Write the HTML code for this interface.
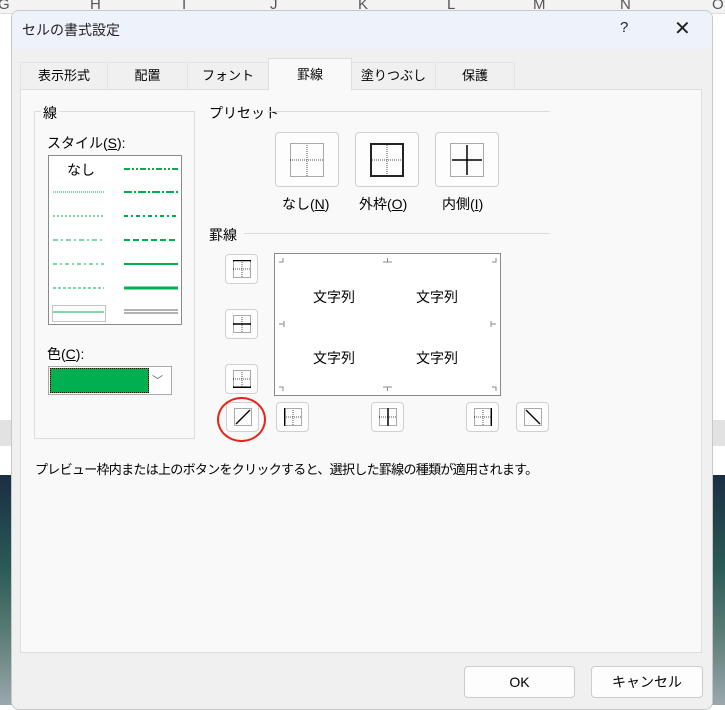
<!DOCTYPE html>
<html><head><meta charset="utf-8"><style>
*{margin:0;padding:0;box-sizing:border-box}
body{width:725px;height:705px;overflow:hidden;position:relative;background:#fff;font-family:"Liberation Sans","Noto Sans CJK JP",sans-serif;color:#000}
.a{position:absolute}
.t{font-size:13px;white-space:nowrap}
.h{position:absolute;top:-4px;color:#555;font-size:15px}
.tab{position:absolute;top:62px;height:28px;border:1px solid #e3e3e3;border-bottom:none;background:#f0f0f0;font-size:13px;text-align:center;line-height:26px}
.btn{position:absolute;background:#fdfdfd;border:1px solid #d0d0d0;border-radius:4px}
.btn svg{position:absolute;left:50%;top:50%;transform:translate(-50%,-50%)}
u{text-decoration:underline}
</style></head><body>
<div class="a" style="left:0;top:0;width:725px;height:14px;background:#f3f3f3;border-bottom:1px solid #ddd"></div>
<div class="h" style="left:-2px">G</div>
<div class="h" style="left:90px">H</div>
<div class="h" style="left:182px">I</div>
<div class="h" style="left:270px">J</div>
<div class="h" style="left:358px">K</div>
<div class="h" style="left:447px">L</div>
<div class="h" style="left:533px">M</div>
<div class="h" style="left:620px">N</div>
<div class="h" style="left:712px">O</div>
<div class="a" style="left:0;top:420px;width:725px;height:26px;background:#e2e2e2"></div>
<div class="a" style="left:0;top:475px;width:725px;height:230px;background:linear-gradient(180deg,#1a2e44,#2a5a55 40%,#5d7d78 70%,#9aa8ad)"></div>
<div class="a" style="left:11px;top:10px;width:702px;height:700px;background:#f0f0f0;border:1px solid #c8c8c8;border-radius:8px;overflow:hidden">
 <div class="a" style="left:0;top:0;width:702px;height:38px;background:#eef2fb"></div>
</div>
<div class="a" style="left:22px;top:20px;font-size:14px;color:#222">セルの書式設定</div>
<div class="a" style="left:620px;top:19px;font-size:15px;color:#222">?</div>
<div class="a" style="left:674px;top:16px;font-size:20px;color:#222;font-weight:300">✕</div>
<div class="tab" style="left:20px;width:88px">表示形式</div>
<div class="tab" style="left:107px;width:81px">配置</div>
<div class="tab" style="left:187px;width:82px">フォント</div>
<div class="tab" style="left:351px;width:85px">塗りつぶし</div>
<div class="tab" style="left:435px;width:80px">保護</div>
<div class="a" style="left:20px;top:89px;width:682px;height:564px;background:#f9f9f9;border:1px solid #dedede"></div>
<div class="tab" style="left:268px;top:58px;width:84px;height:32px;background:#f9f9f9;line-height:32px;border-color:#dedede">罫線</div>
<div class="a" style="left:34px;top:111px;width:161px;height:328px;border:1px solid #dcdcdc"></div>
<div class="a t" style="left:41px;top:103px;background:#f9f9f9;padding:0 2px;font-size:14px">線</div>
<div class="a t" style="left:47px;top:133px;font-size:14px">スタイル(<u>S</u>):</div>
<div class="a" style="left:48px;top:155px;width:134px;height:170px;background:#fff;border:1px solid #8a8a8a"></div>
<svg class="a" style="left:48px;top:155px" width="134" height="170">
<g stroke="#00b050" fill="none">
<line x1="5" y1="37" x2="56" y2="37" stroke-dasharray="1,1"/>
<line x1="5" y1="61" x2="56" y2="61" stroke-dasharray="2,2"/>
<line x1="5" y1="85" x2="56" y2="85" stroke-dasharray="5,3,2,3"/>
<line x1="5" y1="109" x2="56" y2="109" stroke-dasharray="4,3,2,3"/>
<line x1="5" y1="133" x2="56" y2="133" stroke-dasharray="3,2"/>
<line x1="5" y1="157" x2="56" y2="157"/>
<rect x="4.5" y="150.5" width="53" height="16" stroke="#888" stroke-dasharray="1,1"/>
<line x1="76" y1="14" x2="130" y2="14" stroke-width="2" stroke-dasharray="6,2,2,2,2,2"/>
<line x1="76" y1="37" x2="130" y2="37" stroke-width="2" stroke-dasharray="8,2,2,2"/>
<line x1="76" y1="61" x2="130" y2="61" stroke-width="2" stroke-dasharray="4,3,2,3"/>
<line x1="76" y1="85" x2="130" y2="85" stroke-width="2" stroke-dasharray="6,3"/>
<line x1="76" y1="109" x2="130" y2="109" stroke-width="2"/>
<line x1="76" y1="133" x2="130" y2="133" stroke-width="3"/>
<line x1="76" y1="155" x2="130" y2="155" stroke="#666"/>
<line x1="76" y1="158" x2="130" y2="158" stroke="#666"/>
</g></svg>
<div class="a t" style="left:67px;top:160px;font-size:14px">なし</div>
<div class="a t" style="left:47px;top:344px;font-size:14px">色(<u>C</u>):</div>
<div class="a" style="left:48px;top:366px;width:124px;height:29px;background:#fff;border:1px solid #aaa"></div>
<div class="a" style="left:50px;top:368px;width:99px;height:25px;border:1px dotted #000;background:#00b050"></div>
<div class="a" style="left:152px;top:372px;font-size:11px;color:#666">﹀</div>
<div class="a t" style="left:209px;top:103px;font-size:14px">プリセット</div>
<div class="a" style="left:268px;top:111px;width:282px;height:1px;background:#dcdcdc"></div>
<div class="btn" style="left:275px;top:132px;width:64px;height:55px"><svg width="34" height="34"><g fill="none" stroke="#555" stroke-dasharray="1,1"><rect x="0.5" y="0.5" width="33" height="33"/><line x1="17" y1="0" x2="17" y2="34"/><line x1="0" y1="17" x2="34" y2="17"/></g></svg></div>
<div class="btn" style="left:355px;top:132px;width:64px;height:55px"><svg width="34" height="34"><g fill="none" stroke="#555" stroke-dasharray="1,1"><line x1="17" y1="0" x2="17" y2="34"/><line x1="0" y1="17" x2="34" y2="17"/></g><rect x="1" y="1" width="32" height="32" fill="none" stroke="#222" stroke-width="2"/></svg></div>
<div class="btn" style="left:435px;top:132px;width:64px;height:55px"><svg width="34" height="34"><rect x="0.5" y="0.5" width="33" height="33" fill="none" stroke="#555" stroke-dasharray="1,1"/><g stroke="#000" stroke-width="1.5"><line x1="17" y1="2" x2="17" y2="32"/><line x1="2" y1="17" x2="32" y2="17"/></g></svg></div>
<div class="a t" style="left:282px;top:194px;font-size:14px">なし(<u>N</u>)</div>
<div class="a t" style="left:359px;top:194px;font-size:14px">外枠(<u>O</u>)</div>
<div class="a t" style="left:442px;top:194px;font-size:14px">内側(<u>I</u>)</div>
<div class="a t" style="left:209px;top:225px;font-size:14px">罫線</div>
<div class="a" style="left:244px;top:233px;width:306px;height:1px;background:#dcdcdc"></div>
<svg width="0" height="0" style="position:absolute"><defs>
<g id="g"><g fill="none" stroke="#555" stroke-dasharray="1,1"><rect x="0.5" y="0.5" width="17" height="17"/><line x1="9" y1="0" x2="9" y2="18"/><line x1="0" y1="9" x2="18" y2="9"/></g></g>
</defs></svg>
<div class="btn" style="left:225px;top:254px;width:33px;height:30px"><svg width="18" height="18"><use href="#g"/><line x1="0" y1="0.5" x2="18" y2="0.5" stroke="#000" stroke-width="1.5"/></svg></div>
<div class="btn" style="left:225px;top:309px;width:33px;height:30px"><svg width="18" height="18"><use href="#g"/><line x1="0" y1="9" x2="18" y2="9" stroke="#000" stroke-width="1.5"/></svg></div>
<div class="btn" style="left:225px;top:364px;width:33px;height:30px"><svg width="18" height="18"><use href="#g"/><line x1="0" y1="17.3" x2="18" y2="17.3" stroke="#000" stroke-width="1.5"/></svg></div>
<div class="btn" style="left:226px;top:402px;width:33px;height:30px"><svg width="18" height="18"><rect x="0.5" y="0.5" width="17" height="17" fill="none" stroke="#555" stroke-dasharray="1,1"/><line x1="2" y1="16" x2="16" y2="2" stroke="#000" stroke-width="1.3"/></svg></div>
<div class="btn" style="left:276px;top:402px;width:33px;height:30px"><svg width="18" height="18"><use href="#g"/><line x1="0.7" y1="0" x2="0.7" y2="18" stroke="#000" stroke-width="1.5"/></svg></div>
<div class="btn" style="left:371px;top:402px;width:33px;height:30px"><svg width="18" height="18"><use href="#g"/><line x1="9" y1="0" x2="9" y2="18" stroke="#000" stroke-width="1.5"/></svg></div>
<div class="btn" style="left:466px;top:402px;width:33px;height:30px"><svg width="18" height="18"><use href="#g"/><line x1="17.3" y1="0" x2="17.3" y2="18" stroke="#000" stroke-width="1.5"/></svg></div>
<div class="btn" style="left:516px;top:402px;width:33px;height:30px"><svg width="18" height="18"><rect x="0.5" y="0.5" width="17" height="17" fill="none" stroke="#555" stroke-dasharray="1,1"/><line x1="2" y1="2" x2="16" y2="16" stroke="#000" stroke-width="1.3"/></svg></div>
<div class="a" style="left:274px;top:253px;width:227px;height:143px;background:#fff;border:1px solid #8a8a8a"></div>
<svg class="a" style="left:274px;top:253px" width="227" height="143"><g stroke="#888" fill="none">
<path d="M5 9H9V5"/><path d="M222 5V9H218"/><path d="M5 134H9V138"/><path d="M222 138V134H218"/>
<path d="M109 9H118M113.5 9V5"/><path d="M109 134H118M113.5 134V138"/>
<path d="M5 71H10M10 68V74" /><path d="M222 71H217M217 68V74"/>
</g></svg>
<div class="a t" style="left:313px;top:287px;font-size:14px">文字列</div>
<div class="a t" style="left:416px;top:287px;font-size:14px">文字列</div>
<div class="a t" style="left:313px;top:348px;font-size:14px">文字列</div>
<div class="a t" style="left:416px;top:348px;font-size:14px">文字列</div>
<div class="a" style="left:217px;top:397px;width:49px;height:45px;border:2px solid #e8231a;border-radius:50%"></div>
<div class="a t" style="left:35px;top:459px;font-size:13px;letter-spacing:-0.7px">プレビュー枠内または上のボタンをクリックすると、選択した罫線の種類が適用されます。</div>
<div class="btn" style="left:464px;top:666px;width:111px;height:32px;border-color:#ccc;text-align:center;line-height:30px;font-size:14px">OK</div>
<div class="btn" style="left:591px;top:666px;width:112px;height:32px;border-color:#ccc;text-align:center;line-height:30px;font-size:14px">キャンセル</div>
</body></html>
